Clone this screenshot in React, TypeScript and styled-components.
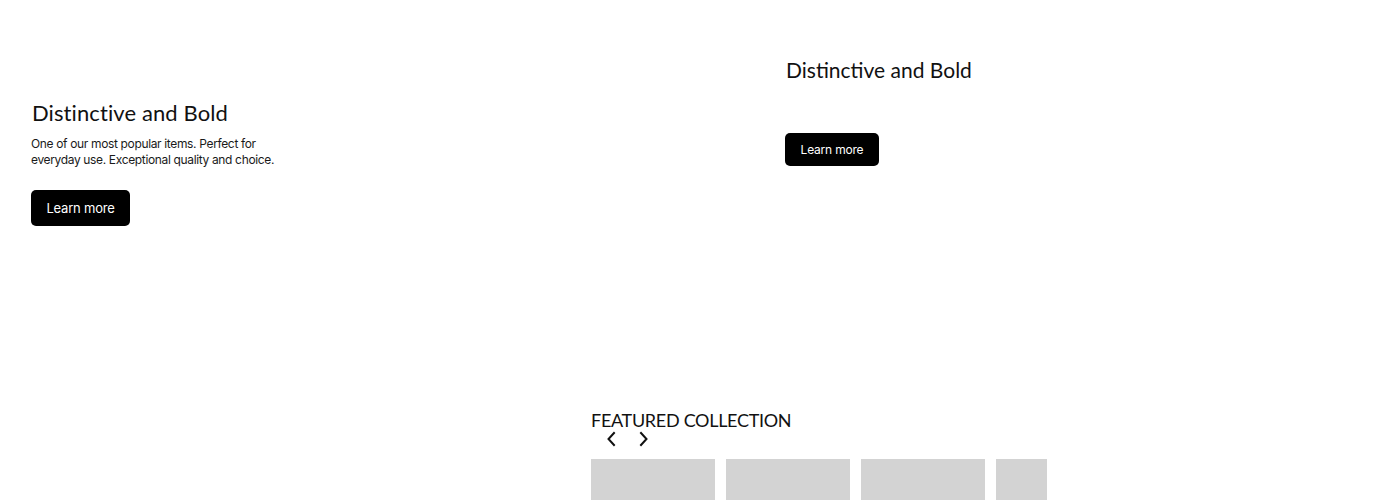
import React from "react";
import styled, { createGlobalStyle } from "styled-components";

const Global = createGlobalStyle`
  html, body { margin: 0; padding: 0; background: #fff; }
  body { font-family: "Inter", "Liberation Sans", sans-serif; color: #111; overflow: hidden; }
  * { box-sizing: border-box; }
`;

const Page = styled.div`
  width: 1400px;
  height: 500px;
  overflow: hidden;
`;

const Hero = styled.section`
  display: grid;
  grid-template-columns: 754px 1fr;
  height: 380px;
`;

const Slide = styled.div<{ $top: number; $gap: number }>`
  display: flex;
  flex-direction: column;
  align-items: flex-start;
  padding: ${(p) => p.$top}px 0 0 31px;
  gap: ${(p) => p.$gap}px;
`;

const Heading = styled.h2<{ $size: number; $ls: number }>`
  margin: 0;
  font-family: "Lato", sans-serif;
  font-weight: 400;
  font-size: ${(p) => p.$size}px;
  letter-spacing: ${(p) => p.$ls}px;
  line-height: 1.2;
  color: #111;
  padding-left: 1px;
`;

const Body = styled.p`
  margin: 10px 0 0;
  font-family: "Inter", sans-serif;
  font-size: 12px;
  line-height: 15.5px;
  letter-spacing: -0.35px;
  color: #1a1a1a;
  width: 250px;
`;

const Button = styled.button<{ $w: number; $h: number; $fs: number; $mt?: number }>`
  width: ${(p) => p.$w}px;
  height: ${(p) => p.$h}px;
  margin-top: ${(p) => p.$mt ?? 0}px;
  background: #000;
  color: #fff;
  border: none;
  border-radius: 5px;
  font-family: "Inter", sans-serif;
  font-size: ${(p) => p.$fs}px;
  letter-spacing: -0.2px;
  cursor: pointer;
  padding: 0;
`;

const Featured = styled.section`
  display: flex;
  flex-direction: column;
  padding: 29px 0 0 591px;
`;

const FeaturedTitle = styled.h3`
  margin: 0;
  font-family: "Lato", sans-serif;
  font-weight: 400;
  font-size: 18px;
  line-height: 22px;
  letter-spacing: -0.3px;
  color: #111;
`;

const Arrows = styled.div`
  display: flex;
  gap: 17px;
  padding-left: 12px;
  height: 16px;
  align-items: center;
`;

const Arrow = styled.button`
  width: 16px;
  height: 16px;
  padding: 0;
  border: none;
  background: none;
  display: flex;
  align-items: center;
  justify-content: center;
  cursor: pointer;
`;

const Track = styled.div`
  display: flex;
  gap: 11px;
  width: 456px;
  overflow: hidden;
  margin-top: 12px;
`;

const Card = styled.div`
  flex: 0 0 124px;
  height: 140px;
  background: #d3d3d3;
`;

const Chevron = ({ dir }: { dir: "left" | "right" }) => (
  <svg width="10" height="16" viewBox="0 0 10 16" fill="none">
    <path
      d={dir === "left" ? "M8 2 L2.5 8 L8 14" : "M2 2 L7.5 8 L2 14"}
      stroke="#111"
      strokeWidth="2"
      strokeLinecap="square"
    />
  </svg>
);

export default function App() {
  return (
    <Page>
      <Global />
      <Hero>
        <Slide $top={100} $gap={0}>
          <Heading $size={22} $ls={0.1}>Distinctive and Bold</Heading>
          <Body>
            One of our most popular items. Perfect for everyday use. Exceptional quality and choice.
          </Body>
          <Button $w={99} $h={36} $fs={13} $mt={23}>
            Learn more
          </Button>
        </Slide>
        <Slide $top={57} $gap={51}>
          <Heading $size={21} $ls={0}>Distinctive and Bold</Heading>
          <Button $w={94} $h={33} $fs={12}>Learn more</Button>
        </Slide>
      </Hero>
      <Featured>
        <FeaturedTitle>FEATURED COLLECTION</FeaturedTitle>
        <Arrows>
          <Arrow aria-label="Previous"><Chevron dir="left" /></Arrow>
          <Arrow aria-label="Next"><Chevron dir="right" /></Arrow>
        </Arrows>
        <Track>
          <Card />
          <Card />
          <Card />
          <Card />
        </Track>
      </Featured>
    </Page>
  );
}
